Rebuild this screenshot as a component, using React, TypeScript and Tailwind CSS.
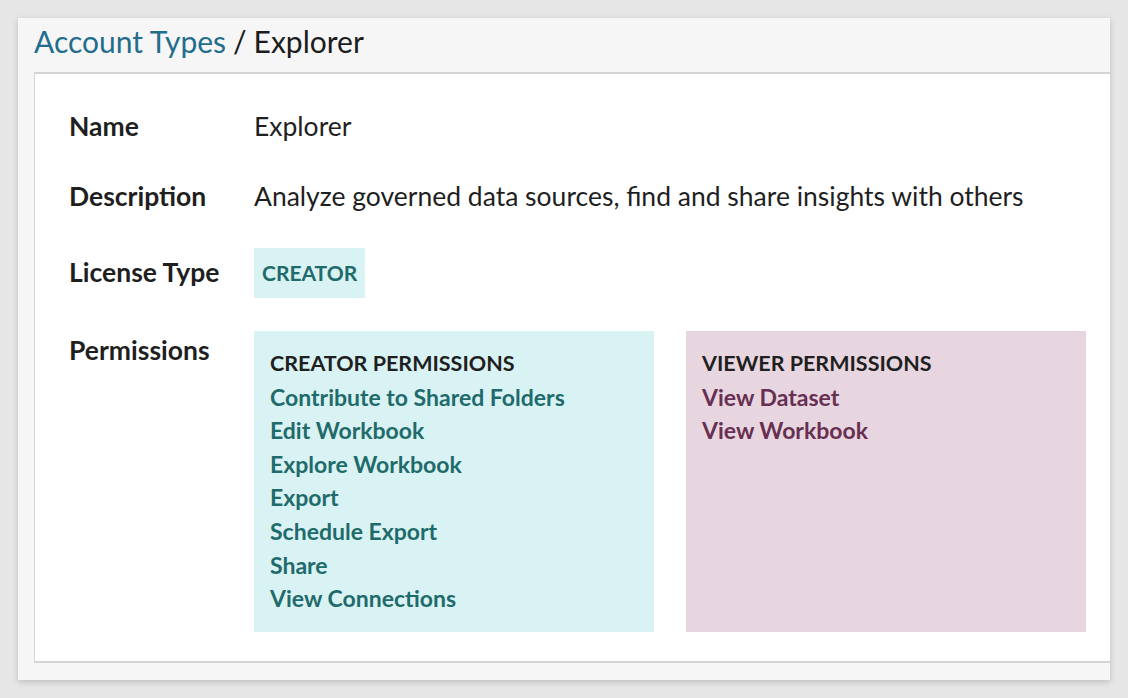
const creatorPerms = [
  "Contribute to Shared Folders",
  "Edit Workbook",
  "Explore Workbook",
  "Export",
  "Schedule Export",
  "Share",
  "View Connections",
];

const viewerPerms = ["View Dataset", "View Workbook"];

export default function App() {
  return (
    <div
      className="h-[698px] w-[1128px] overflow-hidden bg-[#e6e6e6] pl-[18px] pt-[18px]"
      style={{ fontFamily: "Lato, 'Noto Sans', sans-serif" }}
    >
      <div className="flex h-[662px] w-[1092px] flex-col bg-[#f6f6f6] pb-[17px] shadow-[0_2px_6px_rgba(0,0,0,0.18)]">
        {/* breadcrumb */}
        <div className="flex h-[54px] items-center pb-2 pl-4 text-[30px] text-[#1c1c1c]">
          <span className="text-[#236d8c]">Account Types</span>
          <span className="mx-[7px]">/</span>
          <span>Explorer</span>
        </div>

        <div className="ml-4 flex-1 border-b-2 border-l border-t-2 border-[#d4d4d4] bg-white pl-[34px] pt-[37px] text-[#1f1f1f]">
          <div className="flex h-8 items-center">
            <div className="w-[185px] text-[26.5px] font-bold">Name</div>
            <div className="text-[26.5px]">Explorer</div>
          </div>

          <div className="mt-[38px] flex h-8 items-center">
            <div className="w-[185px] text-[26.5px] font-bold">Description</div>
            <div className="text-[26.5px]">Analyze governed data sources, find and share insights with others</div>
          </div>

          <div className="mt-[35px] flex h-[50px] items-center">
            <div className="w-[185px] text-[26.5px] font-bold">License Type</div>
            <div className="flex h-[50px] items-center bg-[#d9f2f4] px-2 text-[21px] font-bold text-[#1f6b6b]">
              CREATOR
            </div>
          </div>

          <div className="mt-[33px] flex items-start">
            <div className="flex h-10 w-[185px] items-end text-[26.5px] font-bold">Permissions</div>
            <div className="flex gap-8 font-bold leading-[33.6px]">
              <div className="h-[301px] w-[400px] bg-[#d9f2f4] px-4 py-4">
                <div className="text-[21.5px] text-[#1f1f1f]">CREATOR PERMISSIONS</div>
                {creatorPerms.map((p) => (
                  <div key={p} className="text-[23px] text-[#1f6b6b]">
                    {p}
                  </div>
                ))}
              </div>
              <div className="h-[301px] w-[400px] bg-[#e7d6e0] px-4 py-4">
                <div className="text-[21.5px] text-[#1f1f1f]">VIEWER PERMISSIONS</div>
                {viewerPerms.map((p) => (
                  <div key={p} className="text-[23px] text-[#672f52]">
                    {p}
                  </div>
                ))}
              </div>
            </div>
          </div>
        </div>
      </div>
    </div>
  );
}
